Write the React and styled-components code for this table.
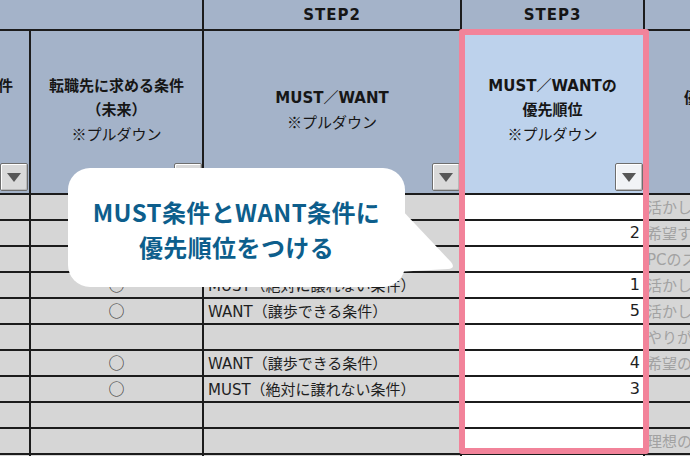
import React from 'react';
import styled, { createGlobalStyle } from 'styled-components';

const Global = createGlobalStyle`
  html, body { margin: 0; padding: 0; background: #ffffff; }
  body { font-family: "DejaVu Sans", "Noto Sans CJK JP", sans-serif; }
  * { box-sizing: border-box; }
`;

const Viewport = styled.div`
  position: relative;
  width: 690px;
  height: 456px;
  overflow: hidden;
  background: #1c1c1c;
`;

const Sheet = styled.div`
  display: grid;
  grid-template-columns: 29px 171px 256px 181px 220px;
  grid-template-rows: 29px 162px repeat(10, 24px) 40px;
  gap: 2px;
  width: max-content;
  background: #1c1c1c;
`;

const StepCell = styled.div`
  grid-column: span ${p => p.$span || 1};
  background: #a4b3c9;
  display: flex;
  align-items: center;
  justify-content: center;
  font-family: "DejaVu Sans", "Noto Sans CJK JP", sans-serif;
  font-weight: 700;
  font-size: 15px;
  letter-spacing: 1px;
  color: #161616;
`;

const HeadCell = styled.div`
  position: relative;
  background: ${p => (p.$active ? '#bdd2ec' : '#a4b3c9')};
  display: flex;
  align-items: center;
  justify-content: ${p => p.$align || 'center'};
  padding: 0 ${p => p.$padRight || 0}px 4px ${p => p.$padLeft || 0}px;
  overflow: hidden;
  color: #161616;
  font-size: 15px;
  line-height: 24px;
  text-align: center;
`;

const HeadText = styled.div`
  flex: none;
  white-space: nowrap;
`;

const Strong = styled.div`
  font-weight: 700;
  min-height: 24px;
`;

const Sub = styled.div`
  font-weight: 400;
  font-family: "Noto Sans CJK JP", sans-serif;
  font-size: 15px;
`;

const Dropdown = styled.div`
  position: absolute;
  right: ${p => p.$right ?? 0}px;
  bottom: 2px;
  width: 28px;
  height: 28px;
  border: 1px solid #6e6e6e;
  border-radius: 2px;
  background: ${p => (p.$light ? '#f1f3f6' : '#d9d9d9')};
  box-shadow: inset 1px 1px 0 #ffffff, inset -1px -1px 0 #b9b9b9;
  display: flex;
  align-items: center;
  justify-content: center;

  &::after {
    content: '';
    width: 0;
    height: 0;
    border-left: 7px solid transparent;
    border-right: 7px solid transparent;
    border-top: 9px solid #575757;
  }
`;

const DataCell = styled.div`
  background: ${p => (p.$white ? '#ffffff' : '#d6d6d6')};
  display: flex;
  align-items: center;
  justify-content: ${p => p.$align || 'flex-start'};
  padding: 0 ${p => p.$padRight || 0}px 2px ${p => p.$padLeft || 0}px;
  overflow: hidden;
  white-space: nowrap;
  font-size: ${p => p.$size || 15}px;
  color: ${p => (p.$faded ? '#a2a2a2' : '#1e1e1e')};
`;

const Mark = styled.span`
  font-family: "Noto Sans CJK JP", sans-serif;
  font-size: 16px;
  color: #333;
`;

const Highlight = styled.div`
  position: absolute;
  left: 459px;
  top: 29px;
  width: 190px;
  height: 425px;
  border: 6px solid #f2839a;
  border-radius: 3px;
  pointer-events: none;
`;

const Bubble = styled.div`
  position: absolute;
  left: 68px;
  top: 168px;
  width: 337px;
  height: 119px;
  background: #ffffff;
  border-radius: 22px;
  display: flex;
  flex-direction: column;
  align-items: center;
  justify-content: center;
  font-family: "Noto Sans CJK JP", sans-serif;
  font-weight: 700;
  font-size: 24px;
  line-height: 35px;
  letter-spacing: 0.4px;
  color: #0d5e8c;
  padding-top: 2px;
`;

const Tail = styled.svg`
  position: absolute;
  left: 328px;
  top: 38px;
  width: 64px;
  height: 70px;
  overflow: visible;
`;

const rows = [
  { mark: '', cond: '', rank: '', note: '活かしたいスキル' },
  { mark: '', cond: '', rank: '2', note: '希望する勤務地' },
  { mark: '', cond: '', rank: '', note: 'PCのスキル' },
  { mark: '○', cond: 'MUST（絶対に譲れない条件）', rank: '1', note: '活かしたい経験' },
  { mark: '○', cond: 'WANT（譲歩できる条件）', rank: '5', note: '活かしたい資格' },
  { mark: '', cond: '', rank: '', note: 'やりがい' },
  { mark: '○', cond: 'WANT（譲歩できる条件）', rank: '4', note: '希望の年収' },
  { mark: '○', cond: 'MUST（絶対に譲れない条件）', rank: '3', note: '' },
  { mark: '', cond: '', rank: '', note: '' },
  { mark: '', cond: '', rank: '', note: '理想の働き方' },
];

export default function App() {
  return (
    <>
      <Global />
      <Viewport>
        <Sheet>
          <StepCell $span={2} />
          <StepCell>STEP2</StepCell>
          <StepCell>STEP3</StepCell>
          <StepCell />

          <HeadCell $align="flex-end" $padRight={16}>
            <HeadText>
              <Strong>現在の職場の条件</Strong>
              <Strong />
              <Strong />
            </HeadText>
            <Dropdown $right={1} />
          </HeadCell>
          <HeadCell>
            <HeadText>
              <Strong>転職先に求める条件</Strong>
              <Strong>（未来）</Strong>
              <Sub>※プルダウン</Sub>
            </HeadText>
            <Dropdown />
          </HeadCell>
          <HeadCell>
            <HeadText>
              <Strong>MUST／WANT</Strong>
              <Sub>※プルダウン</Sub>
            </HeadText>
            <Dropdown />
          </HeadCell>
          <HeadCell $active>
            <HeadText>
              <Strong>MUST／WANTの</Strong>
              <Strong>優先順位</Strong>
              <Sub>※プルダウン</Sub>
            </HeadText>
            <Dropdown $light />
          </HeadCell>
          <HeadCell $align="flex-start" $padLeft={39}>
            <HeadText>
              <Strong>優先したい条件</Strong>
              <Sub>※プルダウン</Sub>
            </HeadText>
          </HeadCell>

          {rows.map((r, i) => (
            <React.Fragment key={i}>
              <DataCell />
              <DataCell $align="center">
                {r.mark && <Mark>{r.mark}</Mark>}
              </DataCell>
              <DataCell $padLeft={4}>{r.cond}</DataCell>
              <DataCell $white $align="flex-end" $padRight={3} $size={16}>
                {r.rank}
              </DataCell>
              <DataCell $faded $padLeft={2}>{r.note}</DataCell>
            </React.Fragment>
          ))}
          <DataCell />
          <DataCell />
          <DataCell />
          <DataCell $white />
          <DataCell />
        </Sheet>

        <Highlight />

        <Bubble>
          <div>MUST条件とWANT条件に</div>
          <div>優先順位をつける</div>
          <Tail viewBox="0 0 64 70">
            <path d="M0 2 L4 2 L55 56 Q60 62 52 63 L0 66 Z" fill="#ffffff" />
          </Tail>
        </Bubble>
      </Viewport>
    </>
  );
}
